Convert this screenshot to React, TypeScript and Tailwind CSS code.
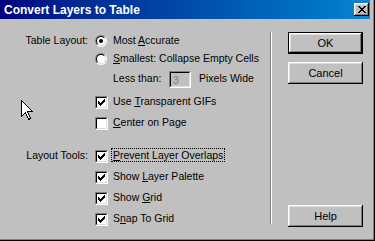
import React from "react";

const font = { fontFamily: '"Liberation Sans", Arial, sans-serif' };

function Check({ checked }: { checked: boolean }) {
  return (
    <div className="w-[13px] h-[13px] border border-t-[#808080] border-l-[#808080] border-b-white border-r-white shrink-0">
      <div className="w-full h-full border border-t-black border-l-black border-b-[#dfdfdf] border-r-[#dfdfdf] bg-white flex items-center justify-center">
        {checked && (
          <svg width="7" height="7" viewBox="0 0 7 7" shapeRendering="crispEdges">
            <path d="M0 2h1v1h1v1h1v-1h1v-1h1v-1h1v-1h1v3h-1v1h-1v1h-1v1h-1v1h-1v-1h-1v-1h-1z" fill="#000" />
          </svg>
        )}
      </div>
    </div>
  );
}

function Radio({ checked }: { checked: boolean }) {
  return (
    <div className="w-[12px] h-[12px] rounded-full border border-t-[#808080] border-l-[#808080] border-b-white border-r-white shrink-0">
      <div className="w-full h-full rounded-full border border-t-black border-l-black border-b-[#dfdfdf] border-r-[#dfdfdf] bg-white flex items-center justify-center">
        {checked && <div className="w-[4px] h-[4px] rounded-full bg-black" />}
      </div>
    </div>
  );
}

function Label({ children, focus }: { children: React.ReactNode; focus?: boolean }) {
  return (
    <span
      className={
        "px-px leading-[15px] border border-dotted " +
        (focus ? "border-black" : "border-transparent")
      }
    >
      {children}
    </span>
  );
}

function Row({
  label,
  className,
  children,
}: {
  label?: string;
  className: string;
  children: React.ReactNode;
}) {
  return (
    <div className={"flex items-center " + className}>
      <div className="w-[88px] text-right whitespace-nowrap">{label}</div>
      <div className="ml-[7px] flex items-center">{children}</div>
    </div>
  );
}

function Button({ children, primary }: { children: React.ReactNode; primary?: boolean }) {
  return (
    <div
      className={
        "w-[75px] h-[22px] flex items-center justify-center text-[11px] " +
        (primary
          ? "border border-black shadow-[inset_-1px_-1px_#000,inset_1px_1px_#fff,inset_-2px_-2px_#808080,inset_2px_2px_#dfdfdf]"
          : "shadow-[inset_-1px_-1px_#000,inset_1px_1px_#fff,inset_-2px_-2px_#808080,inset_2px_2px_#dfdfdf]")
      }
    >
      {children}
    </div>
  );
}

export default function App() {
  return (
    <div
      className="relative w-[375px] h-[241px] bg-[#c0c0c0] text-black text-[10.5px] overflow-hidden shadow-[inset_-1px_-1px_#000,inset_-2px_-2px_#808080]"
      style={font}
    >
      {/* title bar */}
      <div className="mr-[5px] h-[19px] flex items-center justify-between pl-[4px] pr-[1px] bg-gradient-to-r from-[#000080] to-[#1084d0]">
        <span className="text-white font-bold text-[12px] leading-none">Convert Layers to Table</span>
        <div className="w-[15px] h-[13px] bg-[#c0c0c0] flex items-center justify-center shadow-[inset_-1px_-1px_#000,inset_1px_1px_#fff,inset_-2px_-2px_#808080,inset_2px_2px_#dfdfdf]">
          <svg width="8" height="7" viewBox="0 0 8 7" shapeRendering="crispEdges">
            <path d="M0 0h2v1h1v1h2v-1h1v-1h2v1h-1v1h-1v1h-1v1h1v1h1v1h1v1h-2v-1h-1v-1h-2v1h-1v1h-2v-1h1v-1h1v-1h1v-1h-1v-1h-1z" fill="#000" />
          </svg>
        </div>
      </div>

      {/* body */}
      <div className="flex items-start pt-[13px]">
        <div className="w-[270px] flex flex-col">
          <Row label="Table Layout:" className="h-[18px]">
            <Radio checked />
            <span className="ml-[4px]">
              <Label>
                Most <u>A</u>ccurate
              </Label>
            </span>
          </Row>
          <Row className="h-[18px]">
            <Radio checked={false} />
            <span className="ml-[4px] whitespace-nowrap">
              <Label>
                <u>S</u>mallest: Collapse Empty Cells
              </Label>
            </span>
          </Row>
          <Row className="h-[18px] mt-[2px]">
            <span className="pl-[18px] w-[74px] whitespace-nowrap">Less than:</span>
            <div className="w-[22px] h-[17px] border border-t-[#808080] border-l-[#808080] border-b-white border-r-white">
              <div className="w-full h-full border border-t-black border-l-black border-b-[#dfdfdf] border-r-[#dfdfdf] pl-[2px] text-[#808080] leading-[15px]">
                3
              </div>
            </div>
            <span className="ml-[8px] whitespace-nowrap">Pixels Wide</span>
          </Row>
          <Row className="h-[20px] mt-[4px]">
            <Check checked />
            <span className="ml-[3px] whitespace-nowrap">
              <Label>
                Use <u>T</u>ransparent GIFs
              </Label>
            </span>
          </Row>
          <Row className="h-[20px] mt-[1px]">
            <Check checked={false} />
            <span className="ml-[3px] whitespace-nowrap">
              <Label>
                <u>C</u>enter on Page
              </Label>
            </span>
          </Row>
          <Row label="Layout Tools:" className="h-[20px] mt-[13px]">
            <Check checked />
            <span className="ml-[3px] whitespace-nowrap">
              <Label focus>
                <u>P</u>revent Layer Overlaps
              </Label>
            </span>
          </Row>
          <Row className="h-[20px] mt-[1px]">
            <Check checked />
            <span className="ml-[3px] whitespace-nowrap">
              <Label>
                Show <u>L</u>ayer Palette
              </Label>
            </span>
          </Row>
          <Row className="h-[20px] mt-[1px]">
            <Check checked />
            <span className="ml-[3px] whitespace-nowrap">
              <Label>
                Show <u>G</u>rid
              </Label>
            </span>
          </Row>
          <Row className="h-[20px] mt-[1px]">
            <Check checked />
            <span className="ml-[3px] whitespace-nowrap">
              <Label>
                S<u>n</u>ap To Grid
              </Label>
            </span>
          </Row>
        </div>

        {/* separator */}
        <div className="w-[2px] h-[192px] border-l border-l-[#808080] border-r border-r-white" />

        {/* buttons */}
        <div className="ml-[16px] flex flex-col">
          <Button primary>OK</Button>
          <div className="mt-[8px]">
            <Button>Cancel</Button>
          </div>
          <div className="mt-[121px]">
            <Button>Help</Button>
          </div>
        </div>
      </div>

      {/* mouse pointer */}
      <svg
        className="absolute left-[21px] top-[100px]"
        width="12"
        height="20"
        viewBox="0 0 12 20"
        shapeRendering="crispEdges"
      >
        <path d="M0.5 0.5 L0.5 16.5 L4.5 12.5 L7.5 19.5 L9.5 18.5 L6.5 11.5 L11.5 11.5 Z" fill="#fff" stroke="#000" strokeWidth="1" />
      </svg>
    </div>
  );
}
